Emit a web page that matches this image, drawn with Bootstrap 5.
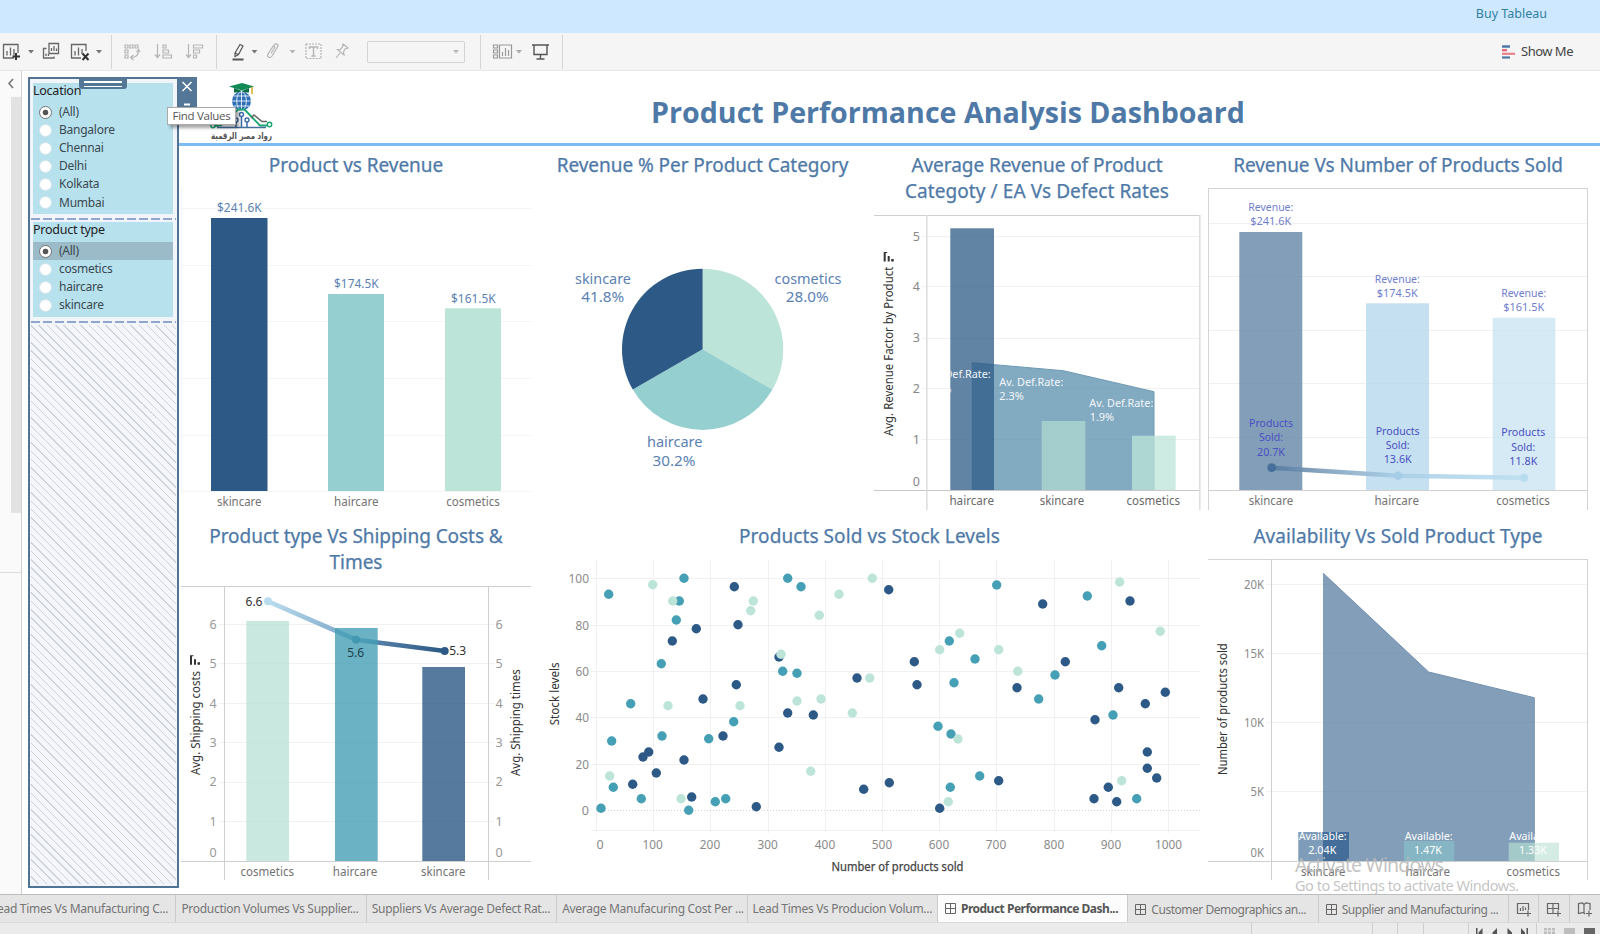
<!DOCTYPE html>
<html lang="en">
<head>
<meta charset="utf-8">
<meta name="viewport" content="width=device-width, initial-scale=1">
<title>Product Performance Analysis Dashboard</title>
<link href="https://cdn.jsdelivr.net/npm/bootstrap@5.3.0/dist/css/bootstrap.min.css" rel="stylesheet">
<style>
  body { width: 1600px; height: 934px; overflow: hidden; font-family: "Noto Sans", "Open Sans", sans-serif; font-size: 13px; color: #333; background: #fff; }
  svg { display: block; flex: none; }
  svg text { font-family: "Noto Sans", "DejaVu Sans", sans-serif; }
  .promo { height: 33px; background: #cde8ff; color: #31809f; padding: 0 53px 5px 0; font-size: 12.5px; }
  .tools { height: 38px; background: #f5f5f5; border-bottom: 1px solid #e6e6e6; }
  .tools .rule { width: 1px; height: 34px; background: #d5d5d5; }
  .field { width: 98px; height: 22px; border: 1px solid #d3d3d3; border-radius: 2px; }
  .showme { font-size: 13px; letter-spacing: -.5px; color: #444; margin-right: 27px; gap: 6px; }
  .work { height: 823px; }
  .rail { width: 22px; border-right: 1px solid #d0d0d0; background: #fafafa; }
  .rail-top { height: 26px; }
  .rail-bar { width: 10px; height: 416px; background: #e2e2e2; }
  .rail-rest { width: 22px; height: 60px; border-bottom: 1px solid #dcdcdc; }
  .filters { width: 151px; height: 811px; margin: 6px 0 0 6px; border: 2px solid #517394; background: #f1f5fa; padding: 4px 3px 2px; }
  .fgroup { background: #b8e1ee; color: #3b4a50; margin: 0 1px 0 0; letter-spacing: -.25px; }
  .fgroup .head { height: 17px; line-height: 16px; color: #222; font-size: 12.5px; }
  .fgroup .opt { height: 18.1px; line-height: 18px; font-size: 12px; gap: 7px; padding-left: 6px; }
  .fgroup .opt.cur { background: #9bbbc8; }
  .g-location { height: 131px; }
  .g-type { height: 95px; margin-top: 2px; }
  .opts { padding-top: 3px; }
  .dot { width: 13px; height: 13px; border-radius: 50%; background: #fff; border: 1px solid #d5e4ea; flex: none; }
  .dot.on { border-color: #777; background: radial-gradient(circle, #555 0 2.5px, #fff 3.2px); }
  .dash { height: 2px; margin: 0 -2px; background: repeating-linear-gradient(90deg, #92a5cd 0 9px, transparent 9px 12px); }
  .hatch { margin: 2px -2px 0; background: repeating-linear-gradient(45deg, #f4f6fb 0 4.9px, #cdd1d8 4.9px 5.9px); }
  .grip { left: 79px; top: 6px; width: 48px; height: 12px; background: #557797; border-radius: 0 0 3px 3px; padding: 4px 5px 2px; }
  .grip i { display: block; height: 1.5px; background: #fff; margin-bottom: 3px; }
  .closer { left: 179px; top: 6px; width: 18px; height: 48px; background: #557797; }
  .tip { left: 167px; top: 36px; width: 69px; height: 18px; border: 1px solid #aaa; background: #fff; box-shadow: 3px 3px 3px rgba(0,0,0,.35); font: 11.5px/16px "Open Sans", sans-serif; letter-spacing: -.3px; color: #555; }
  .banner { height: 75px; border-bottom: 3px solid #7dbcf3; }
  .banner svg { overflow: visible; }
  .banner h1 { font: 700 28.6px/40px "Open Sans", sans-serif; color: #4e79a7; padding-top: 10px; padding-left: 7px; }
  .charts { display: grid; grid-template-columns: 350px 343px 326px 396px; grid-template-rows: 371px 371px; padding-left: 2px; }
  .charts h2 { font-size: 19px; line-height: 26.3px; font-weight: 400; color: #4e79a7; margin: 0; padding-top: 6.2px; text-align: center; letter-spacing: -.05px; -webkit-text-stroke: .25px #4e79a7; }
  .charts .airy { letter-spacing: .08px; }
  .one { height: 33px; } .two { height: 60px; }
  .span2 { grid-column: span 2; }
  .span2 h2 { padding-left: 8px; }
  .notice { left: 1290px; top: 780px; }
  .tabsrow { height: 29px; background: #e5e5e5; border-top: 1px solid #bcbcbc; border-bottom: 1px solid #d9d9d9; overflow: hidden; }
  .sheet { width: 190.4px; flex: none; height: 28px; line-height: 27px; padding-left: 5px; border-right: 1px solid #cacaca; color: #757575; font-size: 12px; letter-spacing: -.3px; white-space: nowrap; gap: 5px; }
  .sheet.dashb { letter-spacing: -.48px; padding-left: 7px; }
  .sheet.cur { background: #fcfcfc; font-weight: 700; letter-spacing: -.5px; color: #555; line-height: 25px; padding-bottom: 2px; }
  .mini { width: 30.2px; height: 28px; border-right: 1px solid #cacaca; }
  .foot { height: 11px; background: #ebebeb; }
</style>
</head>
<body>
<div class="d-flex flex-column position-relative h-100">
  <header class="promo d-flex align-items-center justify-content-end">Buy Tableau</header>

  <nav class="tools d-flex align-items-center">
    <svg width="111" height="36" viewBox="0 35 111 36" fill="none" stroke="#666" stroke-width="1.3">
      <path d="M14 59H3.5V45.5H18V54M7 56.500V52M10.500 56.500V48.500M14 56.500V50"/><path d="M16 54V61M12.500 57.500H20" stroke="#333" stroke-width="2"/>
      <path d="M28 51h6l-3 3.500z" fill="#777" stroke="none"/>
      <path d="M49 44.500H58.500V54.500H49zM51.500 52V49M54 52V47M56.500 52V49.500M46.500 49.500H43.500V59H54V57.500M46 57V54.500M48.500 57V55"/>
      <path d="M81 59H71.500V45.500H86V52M75 56.500V52M78.500 56.500V48.500M82 55V50"/><path d="M82.500 54.500l6 6.500M88.500 54.500l-6 6.500" stroke="#333" stroke-width="2"/>
      <path d="M96 51h6l-3 3.500z" fill="#777" stroke="none"/>
    </svg>
    <div class="rule"></div>
    <svg width="104" height="36" viewBox="112 35 104 36" fill="none" stroke="#b5b5b5" stroke-width="1.2">
      <path d="M125 46h3v3h-3zM130 46h3v3h-3zM135 46h3v3h-3zM125 51h3v3h-3zM125 56h3v3h-3zM138.500 51c0 5-2 7.500-7 7.500M136.500 53l2-2.500 2 2.500M133.500 56l-3 2.500 3 2.500"/>
      <path d="M157.500 45V58M155 55.500l2.500 3 2.500-3M163 46h3v3h-3zM163 51h5.500v3H163zM163 56h8.500v3H163z"/>
      <path d="M188.500 45V58M186 55.500l2.500 3 2.500-3M193.500 46h9v3h-9zM193.500 51h6v3h-6zM193.500 56h3v3h-3z"/>
    </svg>
    <div class="rule"></div>
    <svg width="150" height="36" viewBox="217 35 150 36" fill="none" stroke="#b5b5b5" stroke-width="1.2">
      <path d="M235 54L240 45.500L243 47L238.500 55.500L235 57.500zM235 54l3.500 1.500" stroke="#555"/><path d="M232.500 60.500H243.500" stroke="#555" stroke-width="2"/>
      <path d="M251.500 51h6l-3 3.500z" fill="#777" stroke="none"/>
      <path d="M270 52l4-6c2-2.500 5 -.5 3.500 2l-5.500 9c-2 3-5.500 1-4-2l4.500-7c1-1.500 3-.5 2 1l-3.500 5.500"/>
      <path d="M289.500 51h6l-3 3.500z" fill="#b5b5b5" stroke="none"/>
      <path d="M306 45h15v14.500h-15z" stroke-dasharray="2 1"/><path d="M309.500 50V48H317.500V50M313.500 48V57M311.500 57h4" stroke-width="1.400"/>
      <path d="M343 45l5 4-3 1-1.500 3 .5 3-6.500-5.500 3-.2 2-2.500zM340 54l-4 5"/>
    </svg>
    <div class="field d-flex align-items-center justify-content-end pe-1"><svg width="8" height="5"><path d="M1 1h6l-3 3.500z" fill="#bbb"/></svg></div>
    <svg width="15" height="36"></svg>
    <div class="rule"></div>
    <svg width="81" height="36" viewBox="481 35 81 36" fill="none" stroke="#999" stroke-width="1.200">
      <path d="M493.500 46h4v3h-4zM493.500 51h4v3h-4zM493.500 56h4v3h-4zM499.500 46H511.500V59H499.500zM502.500 57V53M505.500 57V49M508.500 57V51"/>
      <path d="M516 51h6l-3 3.500z" fill="#aaa" stroke="none"/>
      <path d="M532 46H549M534 46V55.500H547V46M540.500 55.500V60M536.500 60H544.500" stroke="#555" stroke-width="1.400"/>
    </svg>
    <div class="rule"></div>
    <div class="showme ms-auto d-flex align-items-center">
      <svg width="13" height="14"><path d="M0 1.500H8" stroke="#4e79a7" stroke-width="2.500"/><path d="M0 5.200H5" stroke="#e8606a" stroke-width="2.200"/><path d="M0 8.800H13" stroke="#e8808a" stroke-width="2.200"/><path d="M0 12.500H8" stroke="#4e79a7" stroke-width="2.200"/></svg>
      Show Me
    </div>
  </nav>

  <main class="work d-flex position-relative">
    <aside class="rail d-flex flex-column align-items-end">
      <div class="rail-top w-100"><svg width="21" height="25" fill="none" stroke="#777" stroke-width="1.600"><path d="M13 8l-4 4.500 4 4.500"/></svg></div>
      <div class="rail-bar"></div>
      <div class="rail-rest"></div>
    </aside>

    <section class="filters d-flex flex-column">
      <div class="fgroup g-location">
        <div class="head">Location</div>
        <div class="opts">
          <div class="opt d-flex align-items-center"><span class="dot on"></span>(All)</div>
          <div class="opt d-flex align-items-center"><span class="dot"></span>Bangalore</div>
          <div class="opt d-flex align-items-center"><span class="dot"></span>Chennai</div>
          <div class="opt d-flex align-items-center"><span class="dot"></span>Delhi</div>
          <div class="opt d-flex align-items-center"><span class="dot"></span>Kolkata</div>
          <div class="opt d-flex align-items-center"><span class="dot"></span>Mumbai</div>
        </div>
      </div>
      <div class="dash mt-1"></div>
      <div class="fgroup g-type">
        <div class="head">Product type</div>
        <div class="opts">
          <div class="opt cur d-flex align-items-center"><span class="dot on"></span>(All)</div>
          <div class="opt d-flex align-items-center"><span class="dot"></span>cosmetics</div>
          <div class="opt d-flex align-items-center"><span class="dot"></span>haircare</div>
          <div class="opt d-flex align-items-center"><span class="dot"></span>skincare</div>
        </div>
      </div>
      <div class="dash mt-1"></div>
      <div class="hatch flex-grow-1"></div>
    </section>

    <section class="flex-grow-1">
      <div class="banner d-flex align-items-center">
        <svg width="110" height="72" viewBox="179 71 110 72" fill="none">
          <path d="M229 86.500L242 83L254 86.500L242 90.500z" fill="#128a55"/><path d="M234 88v4.500h15V88l-7 3z" fill="#0d6e44"/><path d="M252 87v7" stroke="#d9a720" stroke-width="1.500"/>
          <circle cx="241.500" cy="101" r="9.500" fill="#2f6db5"/>
          <path d="M232 101h19M234 96h15M234 106h15M241.500 91.500v19" stroke="#dceaf8" stroke-width="1"/><ellipse cx="241.500" cy="101" rx="4.800" ry="9.300" stroke="#dceaf8"/>
          <path d="M214 126l7-.5L238 109.500h6.500L260 125.500h7" stroke="#1aa673" stroke-width="1.800"/><circle cx="269.500" cy="124.500" r="2.200" stroke="#1aa673" stroke-width="1.400"/><circle cx="213" cy="125.500" r="2.200" stroke="#1aa673" stroke-width="1.400"/>
          <path d="M251 118l3-3L262 121.500h5" stroke="#666" stroke-width="1.500"/>
          <path d="M217 127.500H266" stroke="#44709f" stroke-width="1.600"/>
          <path d="M241.500 127V117M247 127v-5M236 127v-5" stroke="#3a6ca8" stroke-width="1.500"/><circle cx="241.500" cy="114.500" r="2" stroke="#3a6ca8" stroke-width="1.400"/><circle cx="247" cy="120" r="2" stroke="#3a6ca8" stroke-width="1.400"/><circle cx="236" cy="120" r="2" stroke="#3a6ca8" stroke-width="1.400"/>
          <text x="241.500" y="138.500" font-size="9.500" font-weight="700" fill="#555" text-anchor="middle" textLength="61" lengthAdjust="spacingAndGlyphs" style="font-family:'DejaVu Sans'">رواد مصر الرقمية</text>
        </svg>
        <h1 class="mb-0 text-center flex-grow-1">Product Performance Analysis Dashboard</h1>
      </div>
      <div class="charts">
        <article><h2 class="one">Product vs Revenue</h2><svg id="c1" width="350" height="338" viewBox="181 179 350 338"></svg></article>
        <article><h2 class="one">Revenue % Per Product Category</h2><svg id="c2" width="343" height="338" viewBox="531 179 343 338"></svg></article>
        <article><h2 class="two">Average Revenue of Product<br><span class="airy">Categoty / EA Vs Defect Rates</span></h2><svg id="c3" width="328" height="311" viewBox="874 206 328 311"></svg></article>
        <article><h2 class="one">Revenue Vs Number of Products Sold</h2><svg id="c4" width="396" height="338" viewBox="1200 179 396 338"></svg></article>
        <article><h2 class="two">Product type Vs Shipping Costs &amp;<br>Times</h2><svg id="c5" width="350" height="311" viewBox="181 577 350 311"></svg></article>
        <article class="span2"><h2 class="one airy">Products Sold vs Stock Levels</h2><svg id="c6" width="669" height="338" viewBox="531 550 669 338"></svg></article>
        <article><h2 class="one airy">Availability Vs Sold Product Type</h2><svg id="c7" width="396" height="338" viewBox="1200 550 396 338"></svg></article>
      </div>
    </section>

    <div class="closer position-absolute"><svg width="18" height="48" fill="none" stroke="#fff" stroke-width="1.500"><path d="M3.500 5l9 9M12.500 5l-9 9"/><path d="M5 27.500h6" stroke-width="2"/></svg></div>
    <div class="grip position-absolute"><i></i><i></i></div>
    <div class="tip position-absolute text-center">Find Values</div>
    <svg class="notice position-absolute" width="240" height="43" fill="#b9b9b9" fill-opacity=".85">
      <text x="5" y="20.500" font-size="19.500" textLength="149">Activate Windows</text>
      <text x="5" y="40" font-size="14.500" textLength="224">Go to Settings to activate Windows.</text>
    </svg>
  </main>

  <div class="tabsrow d-flex">
    <div class="sheet" style="margin-left:-14px">Lead Times Vs Manufacturing C...</div>
    <div class="sheet">Production Volumes Vs Supplier...</div>
    <div class="sheet">Suppliers Vs Average Defect Rat...</div>
    <div class="sheet">Average Manufacuring Cost Per ...</div>
    <div class="sheet">Lead Times Vs Producion Volum...</div>
    <div class="sheet dashb cur d-flex align-items-center"><svg width="11" height="11" fill="none" stroke="#666"><path d="M.5.5h10v10H.5zM5.500.5v10M.5 5.500h10"/></svg>Product Performance Dash...</div>
    <div class="sheet dashb d-flex align-items-center"><svg width="11" height="11" fill="none" stroke="#666"><path d="M.5.5h10v10H.5zM5.500.5v10M.5 5.500h10"/></svg>Customer Demographics an...</div>
    <div class="sheet dashb d-flex align-items-center"><svg width="11" height="11" fill="none" stroke="#666"><path d="M.5.5h10v10H.5zM5.500.5v10M.5 5.500h10"/></svg>Supplier and Manufacturing ...</div>
    <div class="mini d-flex align-items-center justify-content-center"><svg width="16" height="15" fill="none" stroke="#666" stroke-width="1.200"><path d="M9 11.500H1.500V1.500H12.500V8M4.500 9V6M7 9V4M9.500 8V5.500M12 8.500v6M9 11.500h6"/></svg></div>
    <div class="mini d-flex align-items-center justify-content-center"><svg width="16" height="15" fill="none" stroke="#666" stroke-width="1.200"><path d="M9 11.500H1.500V1.500H12.500V8M7 1.500v10M1.500 6.500H12.500M12 8.500v6M9 11.500h6"/></svg></div>
    <div class="mini border-0 d-flex align-items-center justify-content-center"><svg width="16" height="15" fill="none" stroke="#666" stroke-width="1.200"><path d="M8 12L6.500 10.500 1.500 11.500V1.500L5.500 1 7 2.500 9 1l4 .5V8M7 2.500V11M12 8.500v6M9 11.500h6"/></svg></div>
  </div>
  <footer class="foot d-flex justify-content-end">
    <svg width="360" height="11" viewBox="1240 923 360 11">
      <path d="M1251.500 923v11M1372.500 923v11M1397.500 923v11M1423.500 923v11M1468.500 923v11M1536.500 923v11" stroke="#cfcfcf"/>
      <path d="M1476 928h1.500v6h-1.500zM1482.500 928v6h-4v-1.500zM1497 928v6h-4.500v-1.500zM1507.500 928v6h4.500v-1.500zM1521 928v6h4v-1.500zM1526.500 928h1.500v6h-1.500z" fill="#555"/>
      <path d="M1544 928h3v2.500h-3zM1548 928h3v2.500h-3zM1552 928h3v2.500h-3zM1544 931.500h3v2.500h-3zM1548 931.500h3v2.500h-3zM1552 931.500h3v2.500h-3zM1564 928h11v6h-11z" fill="#bdbdbd"/><path d="M1584 928h11v6h-11z" fill="#666"/>
    </svg>
  </footer>
</div>

<script src="https://cdn.jsdelivr.net/npm/bootstrap@5.3.0/dist/js/bootstrap.bundle.min.js"></script>
<script>
const GRID = '#f1f1f1', NAVY = '#2c5985', TEAL = '#459fb5', MINT = '#bce4d8';
const put = (id, parts) => document.getElementById(id).innerHTML = parts.join('');
const hl = (x1, x2, y, c = GRID, w = 1) => `<rect x="${x1}" y="${Math.round(y - .5)}" width="${x2 - x1}" height="${w}" fill="${c}"/>`;
const vl = (x, y1, y2, c = GRID, w = 1) => `<rect x="${Math.round(x - .5)}" y="${y1}" width="${w}" height="${y2 - y1}" fill="${c}"/>`;
const bar = (x, x2, y, y2, c, o = 1) => `<rect x="${x}" y="${y}" width="${x2 - x}" height="${y2 - y}" fill="${c}" opacity="${o}"/>`;
const txt = (s, x, y, w, size, c, anchor = 'middle', extra = '') =>
  `<text x="${x}" y="${y}" font-size="${size}" fill="${c}" text-anchor="${anchor}" ${w ? `textLength="${w}" lengthAdjust="spacingAndGlyphs"` : ''} ${extra}>${s}</text>`;
const vtxt = (s, x, y1, y2, size = 12) => txt(s, 0, 0, y1 - y2, size, '#333', 'start', `transform="translate(${x} ${y1}) rotate(-90)"`);
const sortIcon = (x, y) => `<path d="M${x} ${y}h2v9.500h-2zM${x + 4} ${y + 4}h2v5.500h-2zM${x + 7.500} ${y + 7}h2.500v2.500h-2.500zM${x + 2} ${y}h1.500v1h-1.500z" fill="#333"/>`;
const W = { skincare: 44.5, haircare: 44.5, cosmetics: 53.5 };
const cats = (names, xs, y, c = '#737373') => names.map((n, i) => txt(n, xs[i], y, W[n], 12, c)).join('');
const grad = (id, x1, x2, stops) => `<defs><linearGradient id="${id}" gradientUnits="userSpaceOnUse" x1="${x1}" x2="${x2}" y1="0" y2="0">${stops.map(([o, c]) => `<stop offset="${o}" stop-color="${c}"/>`).join('')}</linearGradient></defs>`;
const B = '#5b82b3';

put('c1', [
  ...[208.3, 265.3, 321.7, 378, 435, 491].map(y => hl(181, 531, y, '#f4f4f4')), vl(181.5, 188, 493, '#f3f6fa'),
  bar(211, 267.5, 218, 491, NAVY), bar(328, 384, 294, 491, '#95cfcf'), bar(445, 501, 308.3, 491, MINT),
  txt('$241.6K', 239.3, 212.3, 44.5, 12.5, B), txt('$174.5K', 356.3, 288.3, 44.5, 12.5, B), txt('$161.5K', 473.3, 302.8, 44.5, 12.5, B),
  cats(['skincare', 'haircare', 'cosmetics'], [239.3, 356.3, 473], 506)
]);

const cx = 702.6, cy = 349.3, r = 80.6;
const slice = (a, b, c) => { const p = t => `${cx + r * Math.sin(t * Math.PI / 180)} ${cy - r * Math.cos(t * Math.PI / 180)}`; return `<path d="M${cx} ${cy}L${p(a)}A${r} ${r} 0 0 1 ${p(b)}z" fill="${c}"/>`; };
put('c2', [
  slice(0, 120, MINT), slice(120, 240, '#95cfcf'), slice(240, 360, NAVY),
  txt('skincare', 603, 283.5, 56, 14.5, B), txt('41.8%', 602.7, 302.3, 43, 14.5, B),
  txt('cosmetics', 808, 283.5, 67, 14.5, B), txt('28.0%', 807.3, 302.3, 43, 14.5, B),
  txt('haircare', 674.7, 446.7, 55.5, 14.5, B), txt('30.2%', 674, 465.6, 43, 14.5, B)
]);

put('c3', [
  '<clipPath id="k3"><rect x="950.300" y="215" width="260" height="280"/></clipPath>',
  ...[236.3, 286.7, 338.3, 388.7, 439.7].map(y => hl(922, 1200, y)),
  ...[[5, 241], [4, 291], [3, 342.3], [2, 393], [1, 444], [0, 486]].map(([n, y]) => txt(n, 920, y, 0, 12.5, '#888', 'end')),
  '<path d="M971.700 362.700L1063.300 370.700L1154 391.700V490H971.700z" fill="#588eac" opacity=".75"/><path d="M971.700 362.700L1063.300 370.700L1154 391.700V490" fill="none" stroke="#6d9ab5"/>',
  bar(950.3, 994, 228.3, 490, NAVY, .75), bar(1041.7, 1085.3, 421, 490, '#add9d0', .75), bar(1132, 1175.7, 435.7, 490, MINT, .75),
  hl(874, 1200, 215.3, '#cfcfcf'), hl(874, 1200, 490.8, '#c8c8c8'), vl(926.8, 215, 510, '#dedede', 1.6), vl(1199.4, 215, 510, '#dedede', 1.6),
  '<g clip-path="url(#k3)">', txt('Av. Def.Rate:', 990.7, 378.3, 64, 11, '#f2f6fa', 'end'), txt('2.5%', 951.5, 393, 24.5, 11, '#f2f6fa', 'end'), '</g>',
  txt('Av. Def.Rate:', 999.3, 385.7, 64, 11, '#f2f6fa', 'start'), txt('2.3%', 999.3, 400.3, 24.5, 11, '#f2f6fa', 'start'),
  txt('Av. Def.Rate:', 1089.3, 406.7, 64, 11, '#f2f6fa', 'start'), txt('1.9%', 1089.7, 421.3, 24.5, 11, '#f2f6fa', 'start'),
  vtxt('Avg. Revenue Factor by Product', 893, 436, 266.7), sortIcon(883.7, 252),
  cats(['haircare', 'skincare', 'cosmetics'], [971.7, 1062, 1153.3], 505, '#6a6a6a')
]);

const R = '#7080cc', S = '#4a4fc2';
put('c4', [
  ...[223, 276.3, 330.3, 383.3, 437].map(y => hl(1209, 1587, y)),
  bar(1239.3, 1302.3, 232, 490, '#5a7ea2', .75), bar(1366, 1429, 303.3, 490, '#b2d5eb', .75), bar(1492.7, 1555.3, 317.7, 490, '#c7e3f2', .75),
  hl(1208.5, 1588, 188.5, '#d4d4d4'), hl(1208.5, 1588, 490.8, '#d0d0d0'), vl(1208.7, 188, 510, '#d4d4d4'), vl(1587.5, 188, 510, '#d4d4d4'),
  grad('g4', 1271, 1524, [[0, '#55799f'], [.25, '#84a4c0'], [.5, '#a9cfe6'], [1, '#bddff0']]),
  '<path d="M1271.700 467.700L1398 475.700L1524 477.700" fill="none" stroke="url(#g4)" stroke-width="4.600" stroke-opacity=".9"/>',
  '<circle cx="1271.700" cy="467.700" r="4.400" fill="#466f9b"/><circle cx="1398" cy="475.700" r="4.200" fill="#a6cde6"/><circle cx="1524" cy="477.700" r="4.200" fill="#b7dcef"/>',
  ...[[1270.8, 211, '$241.6K'], [1397.3, 282.5, '$174.5K'], [1523.7, 296.8, '$161.5K']].map(([x, y, s]) => txt('Revenue:', x, y, 45, 11.5, R) + txt(s, x, y + 14.3, 41, 11.5, R)),
  ...[[1271, 427, '20.7K'], [1397.7, 434.5, '13.6K'], [1523.3, 436.3, '11.8K']].map(([x, y, s]) => txt('Products', x, y, 44, 11.5, S) + txt('Sold:', x, y + 14.3, 24, 11.5, S) + txt(s, x, y + 28.5, 28, 11.5, S)),
  cats(['skincare', 'haircare', 'cosmetics'], [1271, 1396.7, 1523], 505)
]);

put('c5', [
  ...[624.3, 663.7, 703.3, 742.7, 782, 821.3].map(y => hl(219, 494, y)),
  ...[[6, 628.7], [5, 668], [4, 707.5], [3, 747], [2, 786.3], [1, 825.6], [0, 857]].map(([n, y]) => txt(n, 216.7, y, 0, 12.5, '#999', 'end') + txt(n, 495.5, y, 0, 12.5, '#999', 'start')),
  grad('g5', 268, 445, [[0, '#b9dcef'], [.45, '#7fa9cb'], [.6, '#5580a9'], [1, NAVY]]),
  '<path d="M268 601.300L356 639.700L444.700 651" fill="none" stroke="url(#g5)" stroke-width="4.600"/><circle cx="268" cy="601.300" r="4" fill="#b9dcef"/><circle cx="356" cy="639.700" r="4" fill="#3f7ca2"/><circle cx="444.700" cy="651" r="4" fill="#2c5985"/>',
  bar(246.3, 289, 621, 861, MINT, .8), bar(335, 377.7, 628, 861, TEAL, .8), bar(422.3, 465, 667, 861, NAVY, .8),
  hl(181, 531, 586.5, '#cfcfcf'), hl(181, 531, 861.5, '#cfcfcf'), vl(224.2, 586, 880, '#cfcfcf'), vl(488.8, 586, 880, '#cfcfcf'),
  txt('6.6', 254, 605.7, 17, 12, '#333'), txt('5.6', 355.7, 657, 17, 12, '#1d4350'), txt('5.3', 457.7, 655.3, 17, 12, '#333'),
  vtxt('Avg. Shipping costs', 199.5, 775, 671), vtxt('Avg. Shipping times', 520, 776, 669.3), sortIcon(190, 655.3),
  cats(['cosmetics', 'haircare', 'skincare'], [267.3, 355, 443.3], 876)
]);

/* scatter marks: [x, y] in thirds of a pixel from the origin ox, 515 */
const dots = (ox, list, c) => list.map(([x, y]) => `<circle cx="${(ox + x / 3).toFixed(1)}" cy="${(515 + y / 3).toFixed(1)}" r="4.700" fill="${c}"/>`).join('');
const xs = [596, 653, 710.3, 768, 825.3, 882.3, 939.3, 996.3, 1054.3, 1111.3, 1168.7];
put('c6', [
  ...[578.3, 625.3, 671.7, 717.7, 764.3, 830].map(y => hl(591, 1200, y)),
  ...xs.map(x => vl(x, 560, 833)),
  '<path d="M596 810.500H1200" stroke="#d2d2d2" stroke-dasharray="1 2"/>',
  ...[[100, 582.6], [80, 629.6], [60, 676], [40, 722], [20, 768.6], [0, 815]].map(([n, y]) => txt(n, 589, y, n == 100 ? 20.5 : n ? 13.5 : 0, 12.5, '#8a8a8a', 'end')),
  ...xs.map((x, i) => txt(i * 100, i ? x - .3 : 600, 848.5, i == 10 ? 27 : i ? 20.3 : 0, 12.5, '#8a8a8a')),
  dots(540, [[206,238],[432,190],[418,258],[409,315],[364,446],[272,566],[366,663],[506,671],[215,678],[220,817],[304,851],[183,880],[446,886],[526,860],[557,851],[581,620],[743,190],[783,215],[728,469],[771,475]], TEAL),
  dots(540, [[583,215],[469,341],[594,329],[397,378],[717,426],[589,509],[489,552],[549,663],[326,711],[309,726],[432,735],[349,774],[278,808],[455,846],[649,875],[743,594],[820,600],[951,489],[717,697],[971,823]], NAVY),
  dots(540, [[338,209],[398,258],[640,258],[632,287],[723,418],[384,572],[600,572],[209,783],[423,851],[897,238],[838,301],[997,190],[989,489],[771,558],[843,552],[937,594],[812,769]], MINT),
  dots(870, [[380,210],[652,243],[238,378],[315,432],[252,503],[695,392],[555,480],[506,552],[204,634],[243,657],[729,600],[329,783],[241,817],[800,851]], TEAL),
  dots(870, [[56,224],[518,267],[780,258],[133,440],[141,509],[586,440],[441,518],[746,518],[886,532],[826,566],[675,614],[832,711],[832,760],[860,789],[58,803],[386,797],[209,880],[672,851],[715,817],[740,860]], NAVY),
  dots(870, [[749,201],[871,349],[269,355],[209,404],[386,404],[443,469],[264,672],[235,860],[755,797]], MINT),
  txt('Number of products sold', 897.5, 871.3, 132, 12, '#444', 'middle', 'stroke="#444" stroke-width=".25"'),
  vtxt('Stock levels', 558.5, 725.3, 662.3)
]);

put('c7', [
  ...[584.3, 653.3, 722.3, 791.3].map(y => hl(1266, 1588, y)),
  ...[['20K', 588.6], ['15K', 658], ['10K', 726.6], ['5K', 795.6], ['0K', 856.6]].map(([n, y]) => txt(n, 1264, y, n.length * 6.7, 12, '#8a8a8a', 'end')),
  '<path d="M1323 573L1428.700 672L1534.300 697.700V861H1323z" fill="#5a7ea2" opacity=".75"/><path d="M1323 573L1428.700 672L1534.300 697.700V861" fill="none" stroke="#7391b0"/>',
  bar(1298.3, 1323, 832, 861, '#7f9cb9'), bar(1323, 1349, 832, 861, '#446e99'), bar(1404, 1454.3, 841, 861, '#86b6c4'),
  bar(1508.7, 1534.5, 842.7, 861, '#a3c9c9'), bar(1534.5, 1559, 842.7, 861, '#d5ece4'),
  hl(1208, 1588, 559.5, '#d4d4d4'), hl(1208, 1588, 861.5, '#cfcfcf'), vl(1271.7, 559, 880, '#cfcfcf'), vl(1587.5, 559, 880, '#d4d4d4'),
  ...[[1298.7, 1322.3, '2.04K'], [1404.7, 1428, '1.47K'], [1509.3, 1533, '1.33K']].map(([a, b, s]) => txt('Available:', a, 839.7, 48, 11.5, '#fff', 'start') + txt(s, b, 854, 28, 11.5, '#fff')),
  vtxt('Number of products sold', 1227, 775, 643.3),
  cats(['skincare', 'haircare', 'cosmetics'], [1323.3, 1427.7, 1533.3], 876)
]);
</script>
</body>
</html>
